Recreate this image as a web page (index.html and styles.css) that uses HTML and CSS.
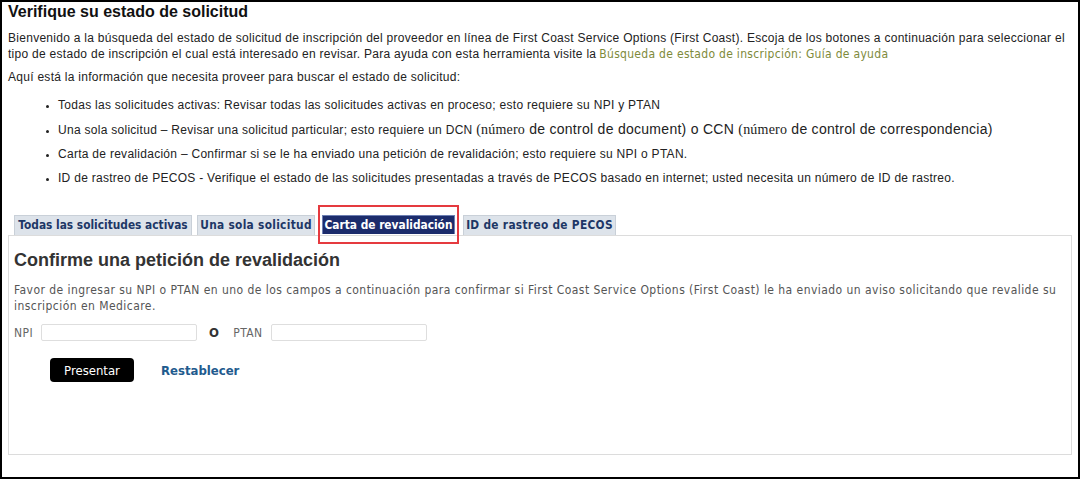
FILE: index.html
```html
<!DOCTYPE html>
<html lang="es">
<head>
<meta charset="utf-8">
<title>Verifique su estado de solicitud</title>
<link rel="stylesheet" href="styles.css">
</head>
<body>
<div class="frame">
  <h1 class="title">Verifique su estado de solicitud</h1>
  <p class="intro">Bienvenido a la búsqueda del estado de solicitud de inscripción del proveedor en línea de First Coast Service Options (First Coast). Escoja de los botones a continuación para seleccionar el tipo de estado de inscripción el cual está interesado en revisar. Para ayuda con esta herramienta visite la<a class="help-link" href="#">Búsqueda de estado de inscripción: Guía de ayuda</a></p>
  <p class="lead">Aquí está la información que necesita proveer para buscar el estado de solicitud:</p>
  <ul class="reqs">
    <li>Todas las solicitudes activas: Revisar todas las solicitudes activas en proceso; esto requiere su NPI y PTAN</li>
    <li>Una sola solicitud – Revisar una solicitud particular; esto requiere un DCN <span class="serif">(número</span><span class="big"> de control de document) o CCN </span><span class="serif">(número</span><span class="big"> de control de correspondencia)</span></li>
    <li>Carta de revalidación – Confirmar si se le ha enviado una petición de revalidación; esto requiere su NPI o PTAN.</li>
    <li>ID de rastreo de PECOS - Verifique el estado de las solicitudes presentadas a través de PECOS basado en internet; usted necesita un número de ID de rastreo.</li>
  </ul>

  <div class="tabset">
    <ul class="tabs">
      <li class="tab tab-all">Todas las solicitudes activas</li>
      <li class="tab tab-single">Una sola solicitud</li>
      <li class="tab tab-reval active">Carta de revalidación</li>
      <li class="tab tab-pecos">ID de rastreo de PECOS</li>
    </ul>
    <div class="panel">
      <h2 class="panel-title">Confirme una petición de revalidación</h2>
      <p class="panel-text">Favor de ingresar su NPI o PTAN en uno de los campos a continuación para confirmar si First Coast Service Options (First Coast) le ha enviado un aviso solicitando que revalide su inscripción en Medicare.</p>
      <div class="form-row">
        <label class="field-label">NPI</label>
        <input class="field" type="text">
        <span class="or">O</span>
        <label class="field-label">PTAN</label>
        <input class="field" type="text">
      </div>
      <div class="actions">
        <button class="btn-submit" type="button">Presentar</button>
        <a class="btn-reset" href="#">Restablecer</a>
      </div>
    </div>
  </div>
</div>
</body>
</html>
```

FILE: styles.css
```css
* { box-sizing: border-box; }

html, body {
  margin: 0;
  padding: 0;
  background: #fff;
}

body {
  font-family: "Liberation Sans", Arial, sans-serif;
  font-size: 12px;
  color: #222;
}

.frame {
  width: 1080px;
  height: 479px;
  border: 2px solid #000;
  padding: 0 6px 0 6px;
  overflow: hidden;
}

.title {
  margin: 0;
  font-size: 16px;
  line-height: 20px;
  font-weight: bold;
  color: #111;
}

.intro {
  margin: 8px 0 0 0;
  line-height: 16px;
  letter-spacing: 0.28px;
}

.help-link {
  display: inline-block;
  vertical-align: top;
  height: 16px;
  line-height: 16px;
  margin-left: 3px;
  color: #7e8a3a;
  text-decoration: none;
  font-family: "DejaVu Sans Condensed", "DejaVu Sans", sans-serif;
  font-size: 12px;
  letter-spacing: 0.3px;
}

.lead {
  margin: 7px 0 0 0;
  line-height: 16px;
  letter-spacing: 0.28px;
}

.reqs {
  margin: 11px 0 0 0;
  padding: 0 0 0 50px;
  list-style: disc;
  letter-spacing: 0.28px;
}

.reqs li {
  line-height: 18px;
  margin-bottom: 6px;
}

.reqs li::marker {
  font-size: 9px;
}

.serif {
  font-family: "Liberation Serif", "Times New Roman", serif;
  font-size: 14px;
  letter-spacing: 0.2px;
}

.big {
  font-size: 14px;
}

.tabset {
  margin-top: 28px;
}

.tabs {
  list-style: none;
  margin: 0;
  padding: 0 0 0 6px;
  display: flex;
  gap: 5px;
  align-items: flex-end;
}

.tab {
  position: relative;
  height: 20px;
  line-height: 18px;
  padding: 0;
  text-align: center;
  background: #dde3ea;
  border: 1px solid #c9d0d8;
  border-bottom: none;
  font-family: "DejaVu Sans Condensed", "DejaVu Sans", sans-serif;
  font-size: 11.8px;
  font-weight: bold;
  color: #1d3766;
  white-space: nowrap;
}

.tab-all { width: 178px; }
.tab-single { width: 118px; letter-spacing: 0.3px; }
.tab-reval { width: 133px; }
.tab-pecos { width: 153px; letter-spacing: 0.3px; }

.tab.active {
  background: #1c2c6c;
  color: #fff;
  border-color: #6d7fb2;
  height: 19px;
  margin-bottom: 1px;
  margin-left: 2px;
  margin-right: 3px;
}

.tab.active::after {
  content: "";
  position: absolute;
  left: -5px;
  right: -5px;
  top: -11px;
  bottom: -10px;
  border: 2px solid #e53a3f;
}

.panel {
  border: 1px solid #dcdcdc;
  height: 220px;
  padding: 13px 5px 0 5px;
}

.panel-title {
  margin: 0;
  font-size: 18px;
  line-height: 22px;
  font-weight: bold;
  color: #333;
}

.panel-text {
  margin: 11px 0 0 0;
  font-family: "DejaVu Sans Condensed", "DejaVu Sans", sans-serif;
  font-size: 12px;
  line-height: 16px;
  color: #555;
  letter-spacing: 0.45px;
}

.form-row {
  margin-top: 10px;
  display: flex;
  align-items: center;
  font-family: "DejaVu Sans Condensed", "DejaVu Sans", sans-serif;
  font-size: 12px;
  color: #666;
  height: 17px;
  letter-spacing: 0.4px;
}

.field-label {
  margin-right: 8px;
}

.field {
  width: 156px;
  height: 17px;
  border: 1px solid #dedede;
  border-radius: 2px;
  background: #fff;
  padding: 0 3px;
  margin: 0;
}

.or {
  font-weight: bold;
  color: #333;
  font-size: 13px;
  margin: 0 14px 0 12px;
}

.actions {
  margin-top: 17px;
  padding-left: 36px;
  display: flex;
  align-items: center;
  gap: 27px;
}

.btn-submit {
  width: 84px;
  height: 24px;
  background: #000;
  color: #fff;
  border: none;
  border-radius: 4px;
  font-family: "DejaVu Sans Condensed", "DejaVu Sans", sans-serif;
  font-size: 13px;
  padding: 0;
}

.btn-reset {
  font-family: "DejaVu Sans Condensed", "DejaVu Sans", sans-serif;
  font-size: 13px;
  font-weight: bold;
  color: #1f5b8e;
  text-decoration: none;
}
```
